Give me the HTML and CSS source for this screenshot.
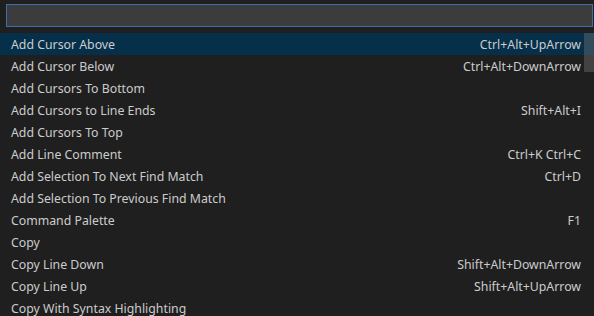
FILE: index.html
```html
<!DOCTYPE html>
<html lang="en">
<head>
    <meta charset="UTF-8">
    <meta name="viewport" content="width=device-width, initial-scale=1.0">
    <title>Command Palette</title>
    <link rel="stylesheet" href="styles.css">
</head>
<body>
    <div class="palette">
        <div class="input-row">
            <input type="text" class="filter-input">
        </div>

        <div class="list">
            <div class="row selected"><span class="label">Add Cursor Above</span><span class="keys">Ctrl+Alt+UpArrow</span></div>
            <div class="row"><span class="label">Add Cursor Below</span><span class="keys">Ctrl+Alt+DownArrow</span></div>
            <div class="row"><span class="label">Add Cursors To Bottom</span><span class="keys"></span></div>
            <div class="row"><span class="label">Add Cursors to Line Ends</span><span class="keys">Shift+Alt+I</span></div>
            <div class="row"><span class="label">Add Cursors To Top</span><span class="keys"></span></div>
            <div class="row"><span class="label">Add Line Comment</span><span class="keys">Ctrl+K Ctrl+C</span></div>
            <div class="row"><span class="label">Add Selection To Next Find Match</span><span class="keys">Ctrl+D</span></div>
            <div class="row"><span class="label">Add Selection To Previous Find Match</span><span class="keys"></span></div>
            <div class="row"><span class="label">Command Palette</span><span class="keys">F1</span></div>
            <div class="row"><span class="label">Copy</span><span class="keys"></span></div>
            <div class="row"><span class="label">Copy Line Down</span><span class="keys">Shift+Alt+DownArrow</span></div>
            <div class="row"><span class="label">Copy Line Up</span><span class="keys">Shift+Alt+UpArrow</span></div>
            <div class="row"><span class="label">Copy With Syntax Highlighting</span><span class="keys"></span></div>
            <div class="scroll-thumb"></div>
        </div>
    </div>
</body>
</html>
```

FILE: styles.css
```css
body {
    margin: 0;
    background-color: #1f1f1f;
    color: #cccccc;
    font-family: "Noto Sans", "Open Sans", sans-serif;
    font-size: 12.3px;
    overflow: hidden;
}
.palette {
    width: 594px;
}
.input-row {
    padding: 4px 1px 0 6px;
}
.filter-input {
    display: block;
    box-sizing: border-box;
    width: 100%;
    height: 23px;
    margin: 0;
    background-color: #3c3c3c;
    border: 1px solid #3f6cad; /* focus border */
    color: #cccccc;
    outline: none;
}
.list {
    position: relative;
    margin-top: 6px;
}
.row {
    display: flex;
    justify-content: space-between;
    align-items: center;
    height: 22px;
    padding: 0 13px 0 11px;
}
.selected {
    background-color: #062f4a;
}
.scroll-thumb {
    position: absolute;
    top: 0;
    right: 0;
    width: 10px;
    height: 39px;
    background-color: rgba(121, 121, 121, 0.4);
}
```
